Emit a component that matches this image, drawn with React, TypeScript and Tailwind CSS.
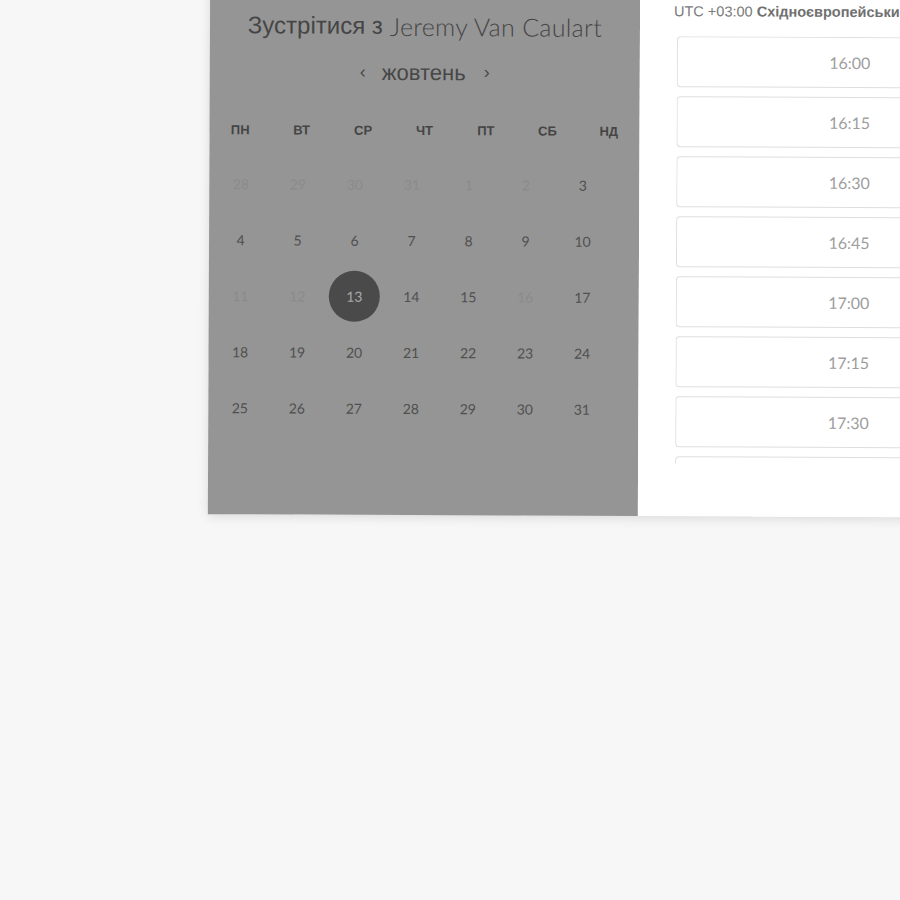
import React from "react";

const rows: { d: number; off?: boolean; sel?: boolean }[][] = [
  [{ d: 28, off: true }, { d: 29, off: true }, { d: 30, off: true }, { d: 31, off: true }, { d: 1, off: true }, { d: 2, off: true }, { d: 3 }],
  [{ d: 4 }, { d: 5 }, { d: 6 }, { d: 7 }, { d: 8 }, { d: 9 }, { d: 10 }],
  [{ d: 11, off: true }, { d: 12, off: true }, { d: 13, sel: true }, { d: 14 }, { d: 15 }, { d: 16, off: true }, { d: 17 }],
  [{ d: 18 }, { d: 19 }, { d: 20 }, { d: 21 }, { d: 22 }, { d: 23 }, { d: 24 }],
  [{ d: 25 }, { d: 26 }, { d: 27 }, { d: 28 }, { d: 29 }, { d: 30 }, { d: 31 }],
];

const days = ["ПН", "ВТ", "СР", "ЧТ", "ПТ", "СБ", "НД"];
const times = ["16:00", "16:15", "16:30", "16:45", "17:00", "17:15", "17:30", "17:45"];

export default function App() {
  return (
    <div className="w-full h-[900px] overflow-hidden bg-[#f7f7f7]">
      <div className="ml-[209px] mt-[-10px] flex w-[854px] h-[526px] rotate-[0.25deg] shadow-[0_2px_12px_rgba(0,0,0,0.12)]">
        {/* Left panel */}
        <div className="w-[430px] shrink-0 bg-[#959595] pt-[21px]">
          <div className="h-[32px] flex items-center justify-center text-[#454545] whitespace-nowrap">
            <span className="font-['Liberation_Sans',sans-serif] text-[24px] leading-[32px]">Зустрітися з</span>
            <span className="ml-[7px] font-['Lato',sans-serif] font-light text-[25px] leading-[32px] tracking-[0.3px] text-[#454545]">Jeremy Van Caulart</span>
          </div>
          <div className="mt-[15px] h-[32px] flex items-center justify-center text-[#474747] font-['Liberation_Sans',sans-serif]">
            <span className="text-[18px] leading-[32px] mr-[16px] -mt-[2px]">‹</span>
            <span className="text-[22px] leading-[32px]">жовтень</span>
            <span className="text-[18px] leading-[32px] ml-[18px] -mt-[2px]">›</span>
          </div>
          <div className="mt-[32px] h-[20px] grid grid-cols-7 font-['Liberation_Sans',sans-serif] font-bold text-[13px] leading-[20px] text-[#454545]">
            {days.map((d) => (
              <div key={d} className="text-center">{d}</div>
            ))}
          </div>
          <div className="mt-[15px] pl-[3px] font-['Lato',sans-serif] text-[14px]">
            {rows.map((r, i) => (
              <div key={i} className="grid grid-cols-[repeat(7,57px)] h-[56px]">
                {r.map((c, j) => (
                  <div key={j} className="flex items-center justify-center">
                    {c.sel ? (
                      <div className="w-[51px] h-[51px] rounded-full bg-[#4a4a4a] flex items-center justify-center text-[#a8a8a8]">
                        {c.d}
                      </div>
                    ) : (
                      <span className={c.off ? "text-[#8b8b8b]" : "text-[#505050]"}>{c.d}</span>
                    )}
                  </div>
                ))}
              </div>
            ))}
          </div>
        </div>
        {/* Right panel */}
        <div className="flex-1 bg-white pt-[11px] pl-[37px] pr-[38px]">
          <div className="-ml-[3px] h-[20px] text-[14.5px] leading-[20px] text-[#7a7a7a] whitespace-nowrap font-['Liberation_Sans',sans-serif]">
            UTC +03:00 <span className="font-bold text-[#707070]">Східноєвропейський час</span>
          </div>
          <div className="mt-[15px] h-[427px] overflow-hidden flex flex-col gap-[9px]">
            {times.map((t) => (
              <div
                key={t}
                className="shrink-0 h-[51px] w-[346px] rounded-[4px] border border-[#dedede] flex items-center justify-center font-['Lato',sans-serif] text-[16px] text-[#9d9d9d]"
              >
                {t}
              </div>
            ))}
          </div>
        </div>
      </div>
    </div>
  );
}
